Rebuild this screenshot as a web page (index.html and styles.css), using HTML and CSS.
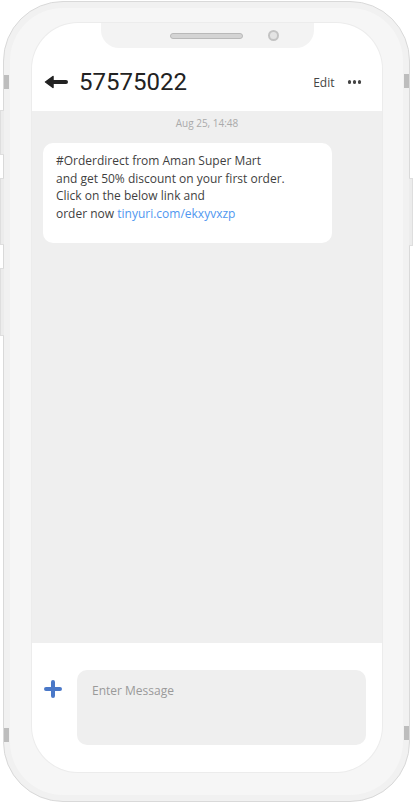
FILE: index.html
```html
<!DOCTYPE html>
<html lang="en">
<head>
    <meta charset="UTF-8">
    <meta name="viewport" content="width=device-width, initial-scale=1.0">
    <title>SMS Preview</title>
    <link rel="stylesheet" href="styles.css">
</head>
<body>
    <div class="phone">
        <span class="band band-tl"></span>
        <span class="band band-tr"></span>
        <span class="band band-bl"></span>
        <span class="band band-br"></span>
        <span class="key key-l1"></span>
        <span class="key key-l2"></span>
        <span class="key key-l3"></span>
        <span class="key key-r1"></span>

        <div class="screen">
            <div class="notch">
                <div class="speaker"></div>
                <div class="camera"></div>
            </div>

            <div class="header">
                <svg class="back" width="24" height="14" viewBox="0 0 24 14">
                    <path d="M1.5 7 L9 1.5 L9 12.5 Z" fill="#222" stroke="#222" stroke-width="1.5" stroke-linejoin="round"/>
                    <path d="M7 7 H22" stroke="#222" stroke-width="4" stroke-linecap="round"/>
                </svg>
                <span class="title">57575022</span>
                <span class="edit">Edit</span>
                <span class="more"><i></i><i></i><i></i></span>
            </div>

            <div class="thread">
                <div class="date">Aug 25, 14:48</div>
                <div class="bubble">
                    #Orderdirect from Aman Super Mart<br>
                    and get 50% discount on your first order.<br>
                    Click on the below link and<br>
                    order now <a href="#">tinyuri.com/ekxyvxzp</a>
                </div>
            </div>

            <div class="composer">
                <svg class="plus" width="18" height="18" viewBox="0 0 18 18">
                    <path d="M9 2 V16 M2 9 H16" stroke="#4a78c8" stroke-width="4" stroke-linecap="round"/>
                </svg>
                <div class="input">Enter Message</div>
            </div>
        </div>
    </div>
</body>
</html>
```

FILE: styles.css
```css
body {
    margin: 0;
    background: #fff;
    font-family: "Open Sans", Arial, sans-serif;
}
.phone {
    position: relative;
    box-sizing: border-box;
    width: 407px;
    height: 801px;
    margin: 1px 0 0 3px;
    padding: 21px 27px 29px 28px;
    background: #f6f6f6;
    border: 1px solid #d9d9d9;
    border-radius: 60px;
    box-shadow: inset 0 0 0 6px #f1f1f1, inset 0 -3px 2px #e2e2e2;
}
.band {
    position: absolute;
    width: 5px;
    height: 14px;
    background: #bdbdbd;
}
.band-tl { left: 0; top: 73px; }
.band-tr { right: 0; top: 72px; }
.band-bl { left: 0; top: 726px; }
.band-br { right: 0; top: 724px; }
.key {
    position: absolute;
    width: 3px;
    background: #ececec;
    border: 1px solid #dedede;
}
.key-l1 { left: -4px; top: 108px; height: 43px; border-right: none; }
.key-l2 { left: -4px; top: 176px; height: 65px; border-right: none; }
.key-l3 { left: -4px; top: 266px; height: 66px; border-right: none; }
.key-r1 { right: -4px; top: 176px; height: 66px; border-left: none; }
.screen {
    height: 100%;
    background: #fff;
    border-radius: 46px;
    overflow: hidden;
    display: flex;
    flex-direction: column;
    box-shadow: 0 0 0 1px #ececec;
}
.notch {
    align-self: center;
    width: 213px;
    height: 25px;
    background: #f3f3f3;
    border-radius: 0 0 18px 18px;
    display: flex;
    align-items: center;
    justify-content: flex-end;
    gap: 25px;
    padding-right: 35px;
    box-sizing: border-box;
    flex-shrink: 0;
}
.speaker {
    width: 71px;
    height: 4px;
    background: #d4d4d4;
    border: 1px solid #b9b9b9;
    border-radius: 3px;
}
.camera {
    width: 7px;
    height: 7px;
    border-radius: 50%;
    background: #e4e4e4;
    border: 2px solid #c3c3c3;
}
.header {
    height: 63px;
    display: flex;
    align-items: center;
    padding: 5px 21px 0 12px;
    box-sizing: border-box;
    flex-shrink: 0;
}
.back {
    margin-right: 11px;
}
.title {
    font-family: Roboto, Arial, sans-serif;
    font-size: 24px;
    font-weight: 400;
    color: #222;
    flex: 1;
}
.edit {
    font-size: 12px;
    color: #444;
    margin-right: 13px;
}
.more {
    display: flex;
    gap: 1.5px;
}
.more i {
    width: 3.5px;
    height: 3.5px;
    border-radius: 50%;
    background: #444;
}
.thread {
    flex: 1;
    background: #efefef;
    padding: 5px 11px;
}
.date {
    text-align: center;
    font-size: 10px;
    color: #aaa;
    margin-bottom: 13px;
}
.bubble {
    width: 289px;
    box-sizing: border-box;
    background: #fff;
    border-radius: 10px;
    padding: 9px 13px 21px;
    font-size: 12px;
    line-height: 17.5px;
    color: #3f3f3f;
}
.bubble a {
    color: #4f97f0;
    text-decoration: none;
}
.composer {
    height: 129px;
    flex-shrink: 0;
    display: flex;
    align-items: flex-start;
    padding: 27px 16px 0 12px;
    box-sizing: border-box;
    gap: 15px;
}
.plus {
    margin-top: 10px;
}
.input {
    flex: 1;
    height: 75px;
    box-sizing: border-box;
    background: #efefef;
    border-radius: 10px;
    padding: 12px 15px;
    font-size: 12px;
    color: #9a9a9a;
}
```
